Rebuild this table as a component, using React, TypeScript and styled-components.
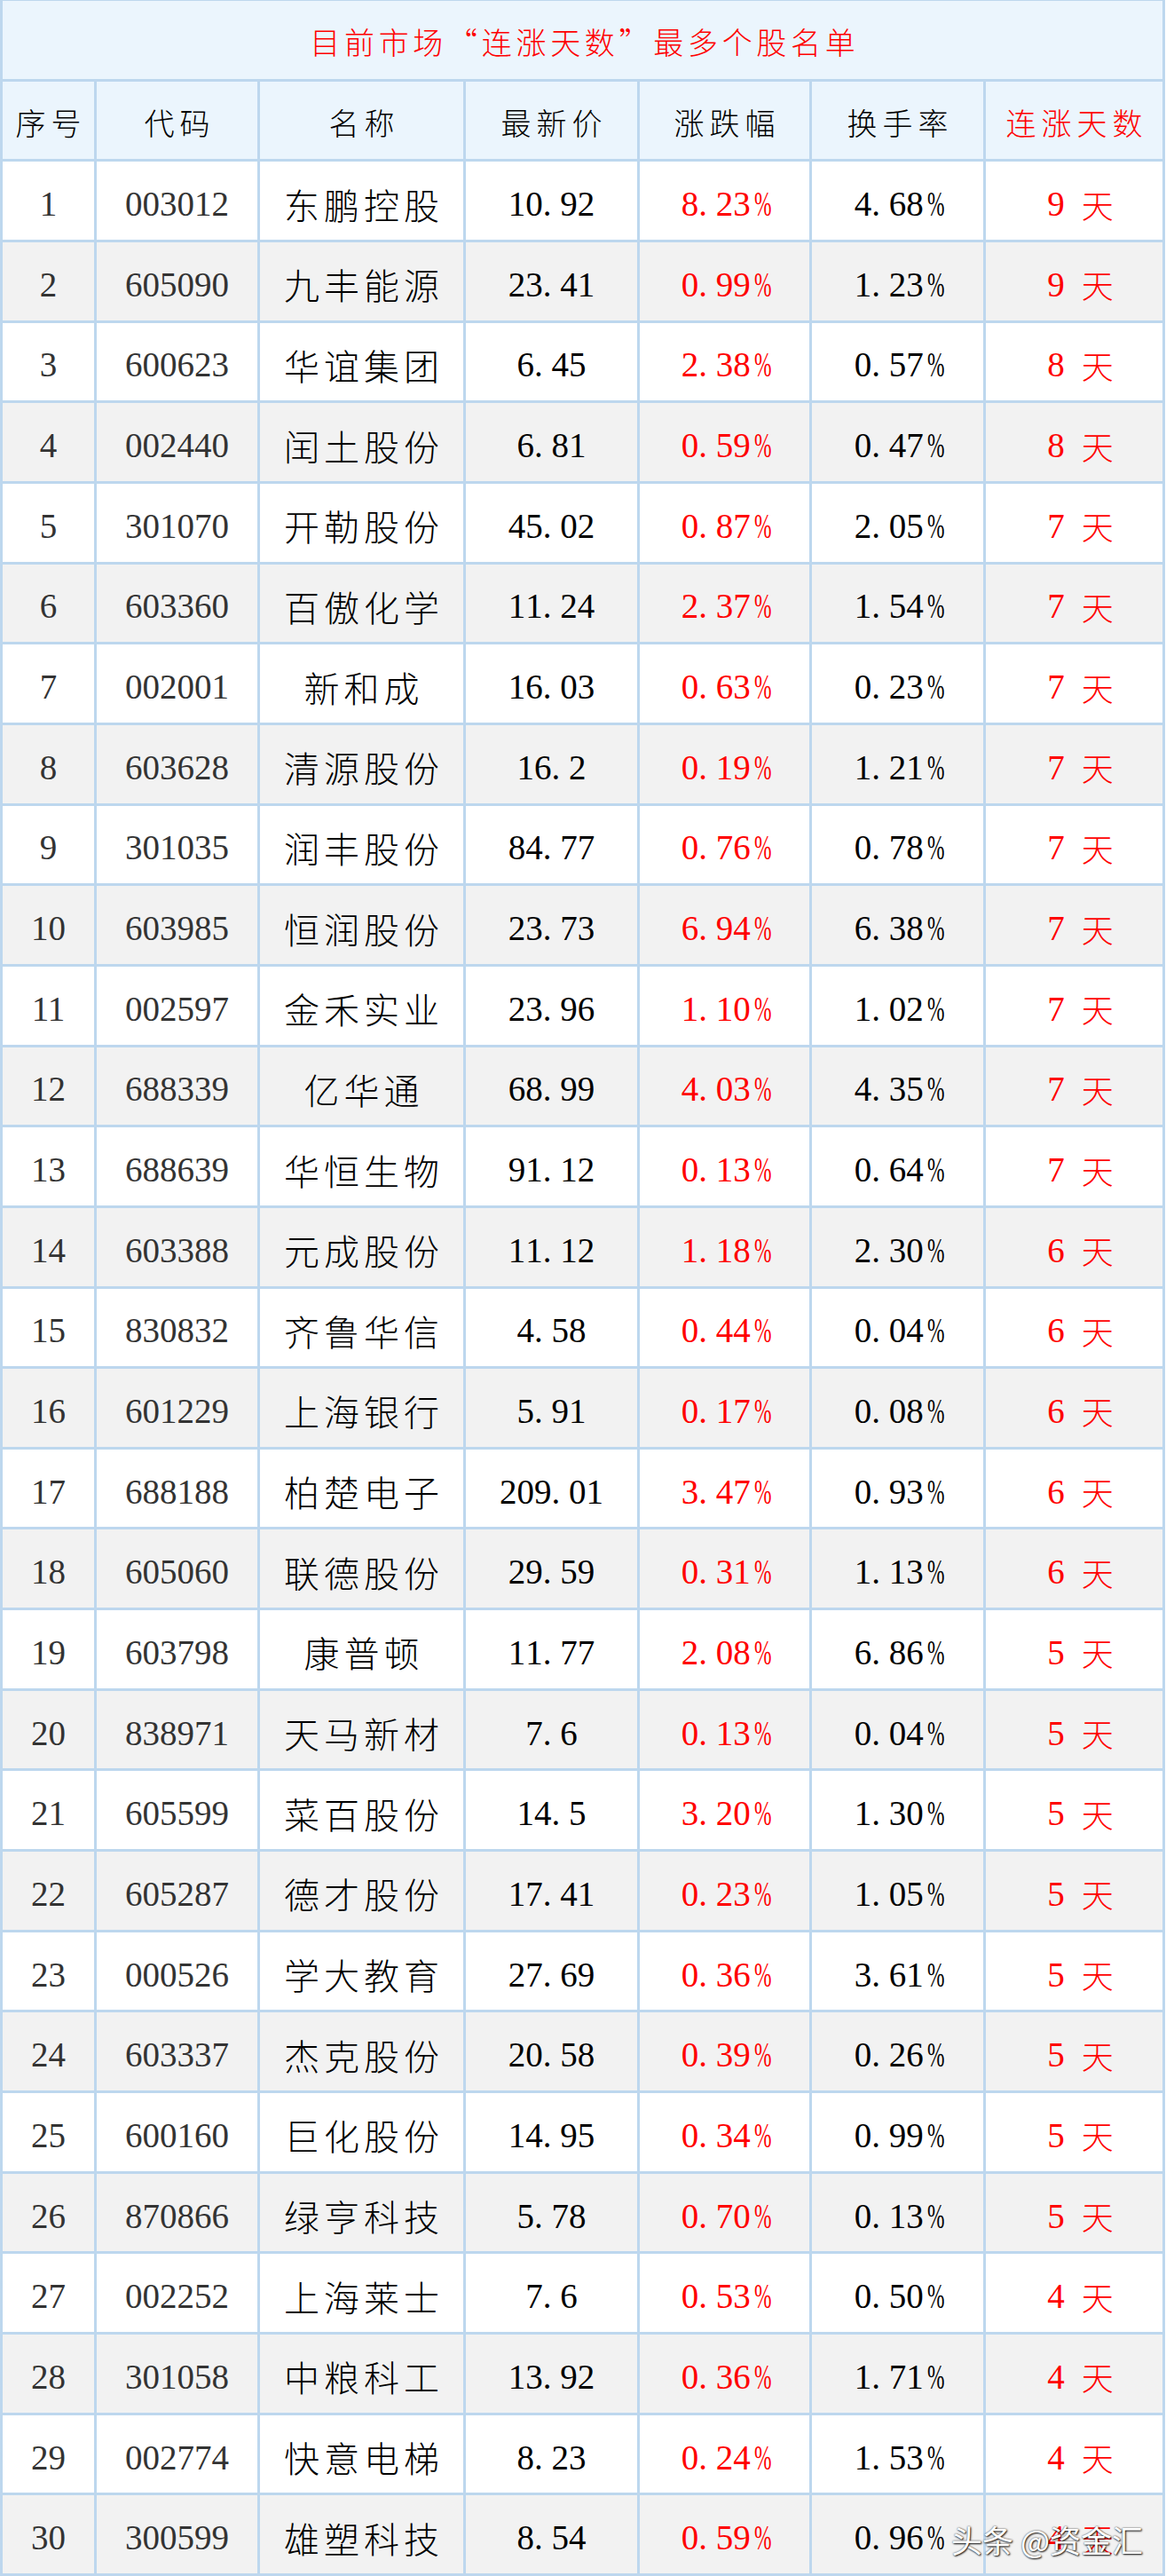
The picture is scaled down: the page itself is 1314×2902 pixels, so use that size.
import React from "react";
import styled, { createGlobalStyle, css } from "styled-components";

type Row = [string, string, string, string, string, number];

// 序号 / 代码 / 名称 / 最新价 / 涨跌幅 / 换手率 / 连涨天数
const rows: Row[] = [
  ["003012", "东鹏控股", "10.92", "8.23%", "4.68%", 9],
  ["605090", "九丰能源", "23.41", "0.99%", "1.23%", 9],
  ["600623", "华谊集团", "6.45", "2.38%", "0.57%", 8],
  ["002440", "闰土股份", "6.81", "0.59%", "0.47%", 8],
  ["301070", "开勒股份", "45.02", "0.87%", "2.05%", 7],
  ["603360", "百傲化学", "11.24", "2.37%", "1.54%", 7],
  ["002001", "新和成", "16.03", "0.63%", "0.23%", 7],
  ["603628", "清源股份", "16.2", "0.19%", "1.21%", 7],
  ["301035", "润丰股份", "84.77", "0.76%", "0.78%", 7],
  ["603985", "恒润股份", "23.73", "6.94%", "6.38%", 7],
  ["002597", "金禾实业", "23.96", "1.10%", "1.02%", 7],
  ["688339", "亿华通", "68.99", "4.03%", "4.35%", 7],
  ["688639", "华恒生物", "91.12", "0.13%", "0.64%", 7],
  ["603388", "元成股份", "11.12", "1.18%", "2.30%", 6],
  ["830832", "齐鲁华信", "4.58", "0.44%", "0.04%", 6],
  ["601229", "上海银行", "5.91", "0.17%", "0.08%", 6],
  ["688188", "柏楚电子", "209.01", "3.47%", "0.93%", 6],
  ["605060", "联德股份", "29.59", "0.31%", "1.13%", 6],
  ["603798", "康普顿", "11.77", "2.08%", "6.86%", 5],
  ["838971", "天马新材", "7.6", "0.13%", "0.04%", 5],
  ["605599", "菜百股份", "14.5", "3.20%", "1.30%", 5],
  ["605287", "德才股份", "17.41", "0.23%", "1.05%", 5],
  ["000526", "学大教育", "27.69", "0.36%", "3.61%", 5],
  ["603337", "杰克股份", "20.58", "0.39%", "0.26%", 5],
  ["600160", "巨化股份", "14.95", "0.34%", "0.99%", 5],
  ["870866", "绿亨科技", "5.78", "0.70%", "0.13%", 5],
  ["002252", "上海莱士", "7.6", "0.53%", "0.50%", 4],
  ["301058", "中粮科工", "13.92", "0.36%", "1.71%", 4],
  ["002774", "快意电梯", "8.23", "0.24%", "1.53%", 4],
  ["300599", "雄塑科技", "8.54", "0.59%", "0.96%", 4],
];

const headers = ["序号", "代码", "名称", "最新价", "涨跌幅", "换手率", "连涨天数"];

const RED = "#ff0000";
const GRID = "#bdd7ee";

const GlobalStyle = createGlobalStyle`
  html, body {
    margin: 0;
    padding: 0;
    background: #fff;
  }
  body {
    font-family: "Noto Sans CJK SC", sans-serif;
  }
`;

const Page = styled.div`
  position: relative;
  width: 1314px;
`;

const Sheet = styled.div`
  display: grid;
  grid-template-columns: 103px 181px 229px 193px 191px 193px 199px;
  grid-auto-rows: 87.66px;
  gap: 3px;
  width: 1313px;
  box-sizing: border-box;
  padding: 1px 3px 3px 3px;
  background: ${GRID};
`;

type Tone = "head" | "odd" | "even";

const Cell = styled.div<{ $tone: Tone }>`
  display: flex;
  align-items: center;
  justify-content: center;
  box-sizing: border-box;
  padding-top: ${(p) => (p.$tone === "head" ? 5 : 7)}px;
  background: ${(p) =>
    p.$tone === "head" ? "#ebf5fd" : p.$tone === "even" ? "#f2f2f2" : "#ffffff"};
`;

const TitleCell = styled(Cell)`
  grid-column: 1 / -1;
`;

const cjk = css`
  font-family: "Noto Sans CJK SC", sans-serif;
  font-weight: 300;
  line-height: 1;
  white-space: nowrap;
`;

const Title = styled.div`
  ${cjk};
  font-size: 34px;
  letter-spacing: 4.7px;
  padding-left: 4.7px;
  color: ${RED};
  font-feature-settings: "fwid";
`;

const HeadText = styled.div<{ $red?: boolean }>`
  ${cjk};
  font-size: 34px;
  letter-spacing: 6px;
  padding-left: 6px;
  color: ${(p) => (p.$red ? RED : "#000")};
`;

const NameText = styled.div`
  ${cjk};
  font-size: 40px;
  letter-spacing: 5px;
  padding-left: 5px;
  color: #000;
`;

const NumText = styled.div<{ $color: string }>`
  font-family: "Liberation Serif", "Times New Roman", serif;
  font-size: 39px;
  line-height: 1;
  white-space: nowrap;
  color: ${(p) => p.$color};
`;

// half-width cell, as in the sheet's song-style digits
const Glyph = styled.span<{ $pct?: boolean }>`
  display: inline-block;
  width: 0.5em;
  text-align: ${(p) => (p.$pct ? "center" : "left")};
  ${(p) =>
    p.$pct &&
    css`
      transform: scaleX(0.6);
    `}
`;

const DayText = styled.div`
  display: flex;
  align-items: center;
  gap: 19px;
  padding-left: 14px;
  color: ${RED};
`;

const DayUnit = styled.span`
  ${cjk};
  font-size: 36px;
`;

const Watermark = styled.div`
  position: absolute;
  right: 26px;
  bottom: 24px;
  font-family: "Noto Sans CJK SC", sans-serif;
  font-size: 35px;
  line-height: 1;
  color: #fff;
  white-space: nowrap;
  text-shadow: 1px 1px 2px rgba(0, 0, 0, 0.9), 0 0 2px rgba(0, 0, 0, 0.7);
`;

const Mono: React.FC<{ text: string; color: string }> = ({ text, color }) => (
  <NumText $color={color}>
    {text.split("").map((c, i) => (
      <Glyph key={i} $pct={c === "%"}>
        {c}
      </Glyph>
    ))}
  </NumText>
);

export default function App() {
  return (
    <Page>
      <GlobalStyle />
      <Sheet>
        <TitleCell $tone="head">
          <Title>目前市场“连涨天数”最多个股名单</Title>
        </TitleCell>
        {headers.map((h, i) => (
          <Cell key={h} $tone="head">
            <HeadText $red={i === headers.length - 1}>{h}</HeadText>
          </Cell>
        ))}
        {rows.map(([code, name, price, change, turnover, days], i) => {
          const tone: Tone = i % 2 === 0 ? "odd" : "even";
          return (
            <React.Fragment key={code}>
              <Cell $tone={tone}>
                <NumText $color="#333">{i + 1}</NumText>
              </Cell>
              <Cell $tone={tone}>
                <NumText $color="#333">{code}</NumText>
              </Cell>
              <Cell $tone={tone}>
                <NameText>{name}</NameText>
              </Cell>
              <Cell $tone={tone}>
                <Mono text={price} color="#000" />
              </Cell>
              <Cell $tone={tone}>
                <Mono text={change} color={RED} />
              </Cell>
              <Cell $tone={tone}>
                <Mono text={turnover} color="#000" />
              </Cell>
              <Cell $tone={tone}>
                <DayText>
                  <Mono text={String(days)} color={RED} />
                  <DayUnit>天</DayUnit>
                </DayText>
              </Cell>
            </React.Fragment>
          );
        })}
      </Sheet>
      <Watermark>头条 @资金汇</Watermark>
    </Page>
  );
}
